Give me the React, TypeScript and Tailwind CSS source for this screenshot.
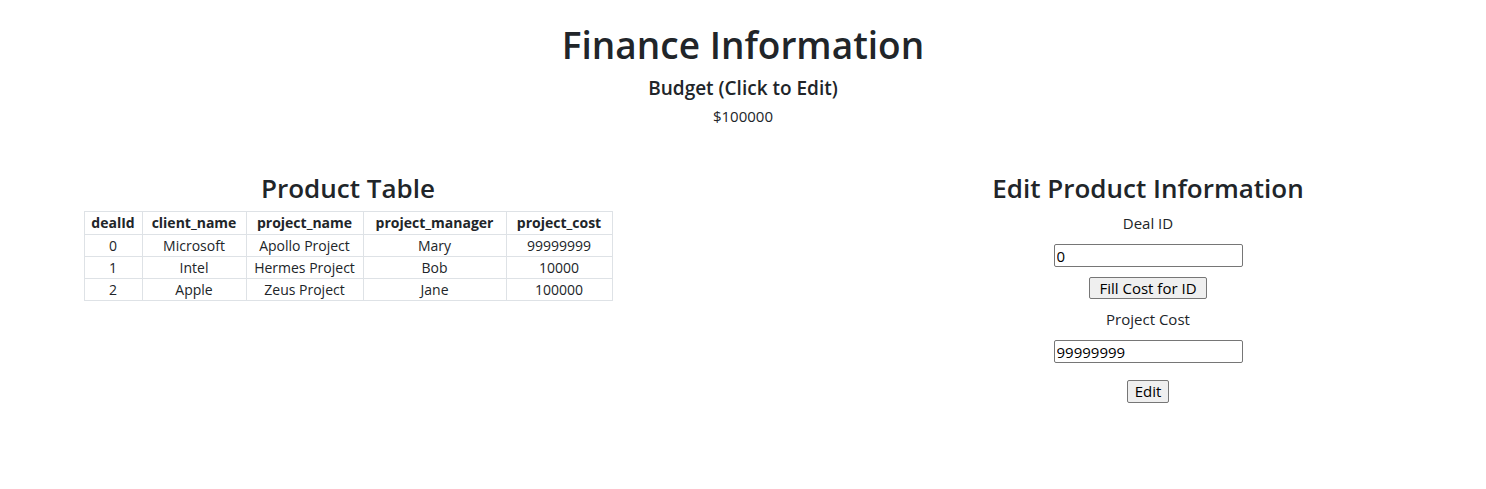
const rows = [
  { dealId: 0, client: "Microsoft", project: "Apollo Project", manager: "Mary", cost: 99999999 },
  { dealId: 1, client: "Intel", project: "Hermes Project", manager: "Bob", cost: 10000 },
  { dealId: 2, client: "Apple", project: "Zeus Project", manager: "Jane", cost: 100000 },
];

const font = { fontFamily: '"Open Sans", "Noto Sans", sans-serif' };

function ProductTable() {
  return (
    <div className="flex flex-col items-center">
      <h2 className="text-[26px] leading-[34px] font-semibold">Product Table</h2>
      <table className="mt-[6px] w-[528px] table-fixed border-collapse text-[14px] leading-[21px]">
        <colgroup>
          <col className="w-[58px]" />
          <col className="w-[104px]" />
          <col className="w-[117px]" />
          <col className="w-[143px]" />
          <col className="w-[106px]" />
        </colgroup>
        <thead>
          <tr>
            <th className="border border-[#dee2e6] px-[2px] leading-[22px] font-bold">dealId</th>
            <th className="border border-[#dee2e6] px-[2px] leading-[22px] font-bold">client_name</th>
            <th className="border border-[#dee2e6] px-[2px] leading-[22px] font-bold">project_name</th>
            <th className="border border-[#dee2e6] px-[2px] leading-[22px] font-bold">project_manager</th>
            <th className="border border-[#dee2e6] px-[2px] leading-[22px] font-bold">project_cost</th>
          </tr>
        </thead>
        <tbody>
          {rows.map((r) => (
            <tr key={r.dealId} className="text-center">
              <td className="border border-[#dee2e6] px-[2px]">{r.dealId}</td>
              <td className="border border-[#dee2e6] px-[2px]">{r.client}</td>
              <td className="border border-[#dee2e6] px-[2px]">{r.project}</td>
              <td className="border border-[#dee2e6] px-[2px]">{r.manager}</td>
              <td className="border border-[#dee2e6] px-[2px]">{r.cost}</td>
            </tr>
          ))}
        </tbody>
      </table>
    </div>
  );
}

function EditForm() {
  return (
    <div className="flex flex-col items-center">
      <h2 className="text-[26px] leading-[34px] font-semibold">Edit Product Information</h2>
      <label className="mt-[6px] text-[15px] leading-[24px]">Deal ID</label>
      <input
        defaultValue="0"
        style={font}
        className="mt-[9px] h-[23px] w-[189px] rounded-[2px] border border-[#767676] px-[2px] text-[15px] leading-[19px] text-black"
      />
      <button
        style={font}
        className="mt-[10px] h-[22px] rounded-[2px] border border-[#767676] bg-[#efefef] px-[9px] text-[15px] leading-[18px] text-black"
      >
        Fill Cost for ID
      </button>
      <label className="mt-[8px] text-[15px] leading-[24px]">Project Cost</label>
      <input
        defaultValue="99999999"
        style={font}
        className="mt-[9px] h-[23px] w-[189px] rounded-[2px] border border-[#767676] px-[2px] text-[15px] leading-[19px] text-black"
      />
      <button
        style={font}
        className="mt-[17px] h-[23px] rounded-[2px] border border-[#767676] bg-[#efefef] px-[7px] text-[15px] leading-[19px] text-black"
      >
        Edit
      </button>
    </div>
  );
}

export default function App() {
  return (
    <div style={font} className="min-h-[489px] bg-white text-[#212529]">
      <div className="flex flex-col items-center">
        <h1 className="mt-[21px] text-[37px] leading-[48px] font-semibold">Finance Information</h1>
        <h5 className="mt-[7px] text-[19px] leading-[24px] font-semibold">Budget (Click to Edit)</h5>
        <p className="mt-[4px] text-[15px] leading-[24px]">$100000</p>
      </div>
      <div className="mt-[43px] flex justify-between">
        <div className="w-[696px]">
          <ProductTable />
        </div>
        <div className="w-[676px]">
          <EditForm />
        </div>
      </div>
    </div>
  );
}
